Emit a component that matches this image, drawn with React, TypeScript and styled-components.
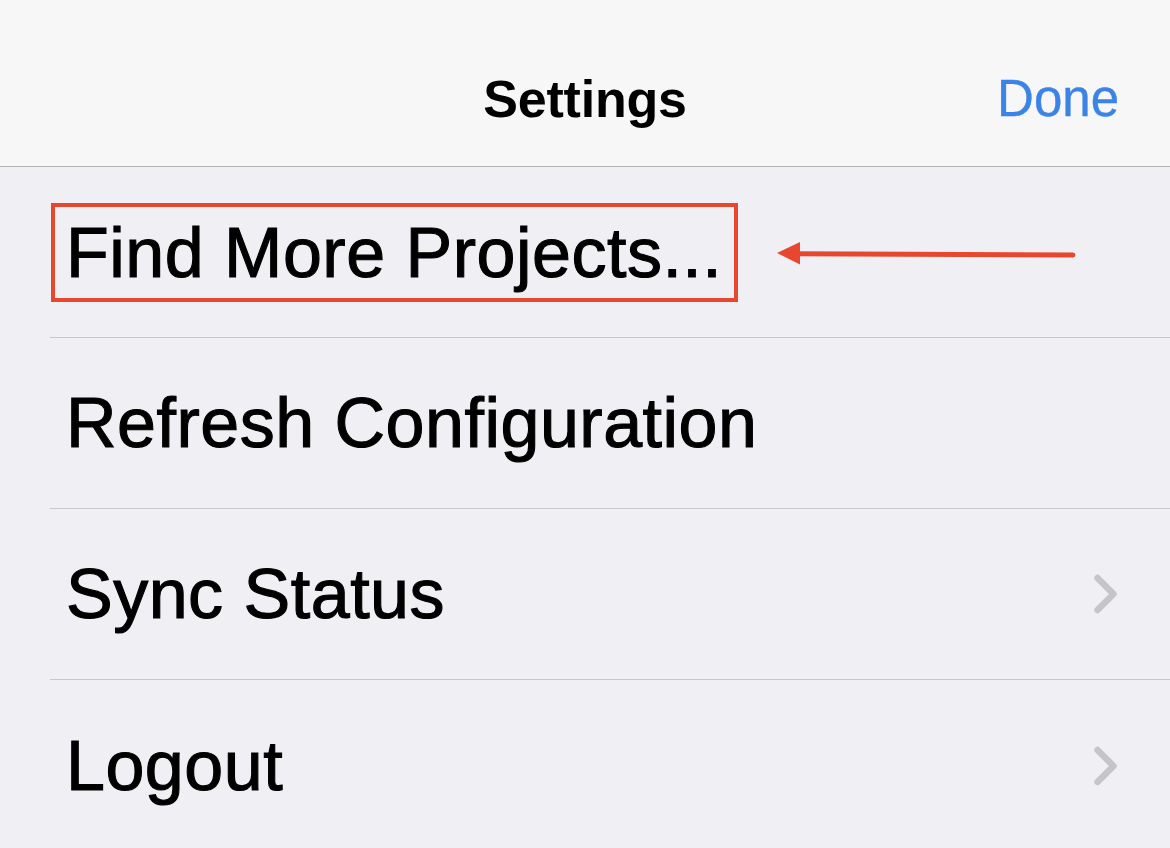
import React from "react";
import styled, { createGlobalStyle } from "styled-components";

const GlobalStyle = createGlobalStyle`
  html, body {
    margin: 0;
    padding: 0;
    background: #efeff4;
    font-family: "Liberation Sans", Arial, Helvetica, sans-serif;
    -webkit-font-smoothing: antialiased;
  }
`;

type Item = {
  label: string;
  chevron?: boolean;
  highlight?: boolean;
};

const items: Item[] = [
  { label: "Find More Projects...", highlight: true },
  { label: "Refresh Configuration" },
  { label: "Sync Status", chevron: true },
  { label: "Logout", chevron: true },
];

const Chevron = () => (
  <ChevronSvg width="26" height="42" viewBox="0 0 26 42">
    <polyline
      points="4.5,5 20.5,21 4.5,37"
      fill="none"
      stroke="#c4c4c9"
      strokeWidth="6.5"
      strokeLinecap="round"
      strokeLinejoin="round"
    />
  </ChevronSvg>
);

const Arrow = () => (
  <ArrowSvg width="300" height="24" viewBox="0 0 300 24">
    <line
      x1="18"
      y1="11.8"
      x2="296"
      y2="13"
      stroke="#e8472f"
      strokeWidth="5"
      strokeLinecap="round"
    />
    <polygon points="0,11 23,0 23,22.5" fill="#e8472f" />
  </ArrowSvg>
);

const App: React.FC = () => {
  return (
    <>
      <GlobalStyle />
      <Screen>
        <NavBar>
          <span />
          <Title>Settings</Title>
          <DoneButton>Done</DoneButton>
        </NavBar>

        <List>
          {items.map((item, i) => (
            <Row key={item.label}>
              <RowInner last={i === items.length - 1}>
                {item.highlight ? (
                  <>
                    <Highlight>{item.label}</Highlight>
                    <Arrow />
                  </>
                ) : (
                  <Label>{item.label}</Label>
                )}
                {item.chevron && <Chevron />}
              </RowInner>
            </Row>
          ))}
        </List>
      </Screen>
    </>
  );
};

export default App;

const Screen = styled.div`
  width: 1170px;
  height: 848px;
  overflow: hidden;
  background: #efeff4;
`;

const NavBar = styled.div`
  height: 135px;
  padding: 31px 51px 0;
  display: grid;
  grid-template-columns: 1fr auto 1fr;
  align-items: center;
  background: #f7f7f7;
  border-bottom: 1px solid #b4b4b4;
`;

const Title = styled.div`
  font-size: 52px;
  font-weight: 700;
  color: #000;
  letter-spacing: -0.2px;
`;

const DoneButton = styled.div`
  justify-self: end;
  font-size: 51px;
  color: #3c83e6;
  -webkit-text-stroke: 0.4px #3c83e6;
`;

const List = styled.div`
  display: flex;
  flex-direction: column;
`;

const Row = styled.div`
  padding-left: 50px;
`;

const RowInner = styled.div<{ last?: boolean }>`
  height: 171px;
  box-sizing: border-box;
  display: flex;
  align-items: center;
  padding-right: 51px;
  border-bottom: ${(p) => (p.last ? "none" : "1px solid #c8c7cc")};
`;

const Label = styled.span`
  padding-left: 16px;
  flex: 1;
  font-size: 70px;
  color: #000;
  letter-spacing: 0.5px;
  -webkit-text-stroke: 1.1px #000;
`;

const Highlight = styled.span`
  display: inline-block;
  margin-left: 1px;
  padding: 4px 12px 3px 11px;
  border: 4px solid #e8472f;
  font-size: 70px;
  line-height: 84px;
  color: #000;
  letter-spacing: 0.5px;
  -webkit-text-stroke: 1.1px #000;
`;

const ArrowSvg = styled.svg`
  margin-left: 39px;
  margin-top: 4px;
  flex-shrink: 0;
`;

const ChevronSvg = styled.svg`
  flex-shrink: 0;
`;
